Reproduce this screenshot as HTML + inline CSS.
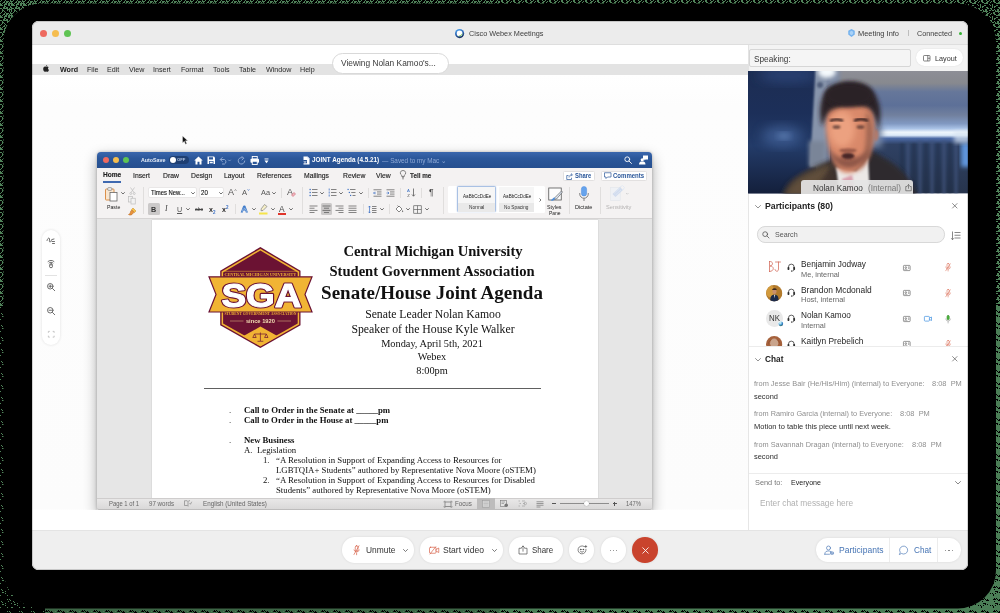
<!DOCTYPE html>
<html><head><meta charset="utf-8">
<style>
*{box-sizing:border-box;margin:0;padding:0}
html,body{width:1000px;height:613px;overflow:hidden;background:#000}
body{position:relative;font-family:"Liberation Sans",sans-serif;color:#333}
.a{position:absolute}
.t{position:absolute;white-space:nowrap;line-height:1;transform-origin:0 50%;transform:scale(.9999)}
.s{font-family:"Liberation Serif",serif;color:#111}
.c{transform:translateX(-50%) scale(.9999)}
svg{position:absolute;overflow:visible}
#win{position:absolute;left:32.200px;top:21.200px;width:935.400px;height:548.400px;border-radius:6.500px;overflow:hidden;background:#fdfdfd}
#pg{position:absolute;left:-32.200px;top:-21.200px;width:1000px;height:613px;will-change:transform;filter:blur(.4px)}
.pill{position:absolute;background:#fff;border-radius:13px;box-shadow:0 0 2px rgba(0,0,0,.10)}
.sep{position:absolute;width:1px;background:#e0dedd}
.n{transform:scaleX(.92)}
.mb .t{font-size:7.75px;top:65.6px;color:#2a2a2a;transform:scaleX(.92)}
.tab .t{font-size:7.4px;top:171.5px;color:#1e1e1e;-webkit-text-stroke:.15px #1e1e1e;transform:scaleX(.92)}
</style></head><body>
<!-- outer dither frame -->
<svg class="a" style="left:0;top:0" width="1000" height="613">
<defs><pattern id="dz" width="12" height="12" patternUnits="userSpaceOnUse"><rect width="12" height="12" fill="#4b7e56"/><g fill="#000"><rect x="9" y="7" width="1" height="1"/><rect x="11" y="11" width="1" height="1"/><rect x="9" y="11" width="1" height="1"/><rect x="10" y="10" width="1" height="1"/><rect x="4" y="0" width="1" height="1"/><rect x="3" y="11" width="1" height="1"/><rect x="10" y="11" width="1" height="1"/><rect x="10" y="1" width="1" height="1"/><rect x="2" y="0" width="1" height="1"/><rect x="9" y="6" width="1" height="1"/><rect x="6" y="5" width="1" height="1"/><rect x="3" y="0" width="1" height="1"/><rect x="1" y="11" width="1" height="1"/><rect x="11" y="5" width="1" height="1"/><rect x="0" y="10" width="1" height="1"/><rect x="8" y="5" width="1" height="1"/><rect x="3" y="4" width="1" height="1"/><rect x="0" y="3" width="1" height="1"/><rect x="11" y="3" width="1" height="1"/><rect x="1" y="4" width="1" height="1"/><rect x="1" y="3" width="1" height="1"/></g></pattern>
<pattern id="dtl" width="12" height="12" patternUnits="userSpaceOnUse"><rect width="12" height="12" fill="#000"/><g fill="#4f8259"><rect x="5" y="0" width="1" height="1"/><rect x="11" y="7" width="1" height="1"/><rect x="2" y="9" width="1" height="1"/><rect x="7" y="10" width="1" height="1"/><rect x="10" y="1" width="1" height="1"/><rect x="1" y="4" width="1" height="1"/><rect x="0" y="3" width="1" height="1"/><rect x="10" y="0" width="1" height="1"/><rect x="5" y="6" width="1" height="1"/><rect x="4" y="11" width="1" height="1"/><rect x="4" y="1" width="1" height="1"/><rect x="11" y="4" width="1" height="1"/><rect x="11" y="10" width="1" height="1"/><rect x="8" y="5" width="1" height="1"/><rect x="3" y="2" width="1" height="1"/><rect x="11" y="2" width="1" height="1"/><rect x="10" y="9" width="1" height="1"/><rect x="9" y="3" width="1" height="1"/><rect x="9" y="10" width="1" height="1"/><rect x="11" y="3" width="1" height="1"/><rect x="11" y="1" width="1" height="1"/><rect x="11" y="8" width="1" height="1"/><rect x="0" y="1" width="1" height="1"/><rect x="7" y="1" width="1" height="1"/><rect x="8" y="3" width="1" height="1"/><rect x="0" y="8" width="1" height="1"/><rect x="1" y="8" width="1" height="1"/><rect x="8" y="1" width="1" height="1"/><rect x="6" y="3" width="1" height="1"/><rect x="0" y="5" width="1" height="1"/><rect x="10" y="7" width="1" height="1"/><rect x="9" y="11" width="1" height="1"/><rect x="11" y="5" width="1" height="1"/><rect x="8" y="9" width="1" height="1"/><rect x="2" y="10" width="1" height="1"/><rect x="11" y="11" width="1" height="1"/><rect x="6" y="4" width="1" height="1"/><rect x="7" y="8" width="1" height="1"/><rect x="10" y="3" width="1" height="1"/><rect x="7" y="7" width="1" height="1"/><rect x="8" y="4" width="1" height="1"/><rect x="4" y="6" width="1" height="1"/><rect x="4" y="2" width="1" height="1"/><rect x="7" y="9" width="1" height="1"/><rect x="6" y="1" width="1" height="1"/><rect x="4" y="8" width="1" height="1"/><rect x="1" y="5" width="1" height="1"/><rect x="3" y="10" width="1" height="1"/><rect x="1" y="0" width="1" height="1"/><rect x="0" y="4" width="1" height="1"/><rect x="9" y="8" width="1" height="1"/><rect x="5" y="3" width="1" height="1"/><rect x="2" y="3" width="1" height="1"/><rect x="11" y="9" width="1" height="1"/><rect x="7" y="2" width="1" height="1"/><rect x="4" y="7" width="1" height="1"/><rect x="6" y="8" width="1" height="1"/><rect x="9" y="5" width="1" height="1"/><rect x="4" y="5" width="1" height="1"/><rect x="5" y="4" width="1" height="1"/><rect x="9" y="2" width="1" height="1"/><rect x="9" y="4" width="1" height="1"/><rect x="3" y="8" width="1" height="1"/><rect x="5" y="8" width="1" height="1"/><rect x="6" y="2" width="1" height="1"/><rect x="4" y="4" width="1" height="1"/><rect x="6" y="7" width="1" height="1"/><rect x="2" y="5" width="1" height="1"/><rect x="3" y="7" width="1" height="1"/><rect x="10" y="6" width="1" height="1"/><rect x="2" y="11" width="1" height="1"/><rect x="9" y="9" width="1" height="1"/></g></pattern><pattern id="dtr" width="12" height="12" patternUnits="userSpaceOnUse"><rect width="12" height="12" fill="#000"/><g fill="#4f8259"><rect x="5" y="0" width="1" height="1"/><rect x="6" y="5" width="1" height="1"/><rect x="2" y="2" width="1" height="1"/><rect x="8" y="5" width="1" height="1"/><rect x="10" y="2" width="1" height="1"/><rect x="3" y="3" width="1" height="1"/><rect x="1" y="11" width="1" height="1"/><rect x="1" y="5" width="1" height="1"/><rect x="0" y="5" width="1" height="1"/><rect x="8" y="6" width="1" height="1"/><rect x="6" y="2" width="1" height="1"/><rect x="1" y="3" width="1" height="1"/><rect x="4" y="8" width="1" height="1"/><rect x="7" y="8" width="1" height="1"/><rect x="5" y="10" width="1" height="1"/><rect x="3" y="8" width="1" height="1"/><rect x="2" y="3" width="1" height="1"/><rect x="2" y="9" width="1" height="1"/><rect x="10" y="7" width="1" height="1"/><rect x="10" y="0" width="1" height="1"/><rect x="9" y="10" width="1" height="1"/><rect x="0" y="3" width="1" height="1"/><rect x="8" y="10" width="1" height="1"/><rect x="6" y="10" width="1" height="1"/><rect x="8" y="7" width="1" height="1"/><rect x="10" y="6" width="1" height="1"/><rect x="11" y="2" width="1" height="1"/><rect x="2" y="10" width="1" height="1"/><rect x="2" y="0" width="1" height="1"/><rect x="1" y="9" width="1" height="1"/><rect x="11" y="6" width="1" height="1"/><rect x="3" y="1" width="1" height="1"/><rect x="6" y="8" width="1" height="1"/><rect x="7" y="9" width="1" height="1"/><rect x="9" y="1" width="1" height="1"/><rect x="9" y="0" width="1" height="1"/><rect x="3" y="11" width="1" height="1"/><rect x="0" y="11" width="1" height="1"/><rect x="11" y="10" width="1" height="1"/><rect x="3" y="7" width="1" height="1"/><rect x="7" y="1" width="1" height="1"/><rect x="4" y="1" width="1" height="1"/><rect x="5" y="4" width="1" height="1"/><rect x="2" y="7" width="1" height="1"/><rect x="1" y="10" width="1" height="1"/><rect x="8" y="4" width="1" height="1"/><rect x="11" y="11" width="1" height="1"/><rect x="2" y="11" width="1" height="1"/><rect x="10" y="1" width="1" height="1"/><rect x="10" y="9" width="1" height="1"/><rect x="3" y="2" width="1" height="1"/></g></pattern><pattern id="dbl" width="12" height="12" patternUnits="userSpaceOnUse"><rect width="12" height="12" fill="#000"/><g fill="#4f8259"><rect x="5" y="5" width="1" height="1"/><rect x="7" y="7" width="1" height="1"/><rect x="11" y="3" width="1" height="1"/><rect x="0" y="7" width="1" height="1"/><rect x="9" y="11" width="1" height="1"/><rect x="5" y="3" width="1" height="1"/><rect x="1" y="1" width="1" height="1"/><rect x="3" y="4" width="1" height="1"/><rect x="2" y="4" width="1" height="1"/><rect x="7" y="11" width="1" height="1"/><rect x="10" y="0" width="1" height="1"/><rect x="8" y="1" width="1" height="1"/><rect x="11" y="7" width="1" height="1"/><rect x="2" y="2" width="1" height="1"/></g></pattern>
</defs>
<rect width="1000" height="613" fill="url(#dz)"/>
<rect x="0" y="0" width="500" height="306" fill="url(#dtl)"/>
<rect x="500" y="0" width="500" height="306" fill="url(#dtr)"/>
<rect x="0" y="306" width="500" height="307" fill="url(#dbl)"/>
<rect x="45" y="608" width="955" height="5" fill="url(#dz)" opacity=".8"/>
<rect x="3.500" y="3.500" width="992.500" height="605" rx="38" ry="38" fill="#000"/>
</svg>
<div id="win"><div id="pg">
<!-- title bar -->
<div class="a" style="left:32px;top:21px;width:936px;height:24px;background:#ececec;border-bottom:1px solid #dedede"></div>
<div class="a" style="left:40.2px;top:29.5px;width:7px;height:7px;border-radius:50%;background:#ee6a5f"></div>
<div class="a" style="left:52px;top:29.5px;width:7px;height:7px;border-radius:50%;background:#f5bd4f"></div>
<div class="a" style="left:63.5px;top:29.5px;width:7px;height:7px;border-radius:50%;background:#5fc453"></div>
<svg style="left:455px;top:28.700px" width="9.200" height="9.200" viewBox="0 0 18 18"><defs><radialGradient id="wb" cx="35%" cy="30%" r="75%"><stop offset="0" stop-color="#eafaff"/><stop offset=".35" stop-color="#8fd0ea"/><stop offset=".7" stop-color="#2f7fc4"/><stop offset="1" stop-color="#123a78"/></radialGradient><linearGradient id="wb2" x1=".3" y1="0" x2=".7" y2="1"><stop offset="0" stop-color="#4aa0ec"/><stop offset=".5" stop-color="#2a62b0"/><stop offset="1" stop-color="#15284e"/></linearGradient></defs><circle cx="9" cy="9" r="9" fill="url(#wb2)"/><circle cx="9" cy="8.600" r="5.600" fill="#fff"/><path d="M14.400 7.500 A5.600 5.600 0 0 1 6.500 13.600 C10.500 13.500 13.500 11 14.400 7.500Z" fill="#5dbb46"/></svg>
<div class="t" style="left:468.7px;top:29.9px;font-size:7.9px;color:#3c3c3c;transform:scaleX(.924)">Cisco Webex Meetings</div>
<svg style="left:847.5px;top:29px" width="7" height="8" viewBox="0 0 14 16"><path d="M7 0 L13.5 3.5 V11 L7 16 L.5 11 V3.500Z" fill="#74b2ee"/><path d="M7 3.500 L10.5 5.500 V10 L7 12.500 L3.500 10 V5.500Z" fill="#a9d2f8"/></svg>
<div class="t" style="left:858px;top:29.9px;font-size:8px;color:#3c3c3c;transform:scaleX(.931)">Meeting Info</div>
<div class="a" style="left:908px;top:30px;width:1px;height:6px;background:#bdbdbd"></div>
<div class="t" style="left:917px;top:29.9px;font-size:7.9px;color:#3c3c3c;transform:scaleX(.916)">Connected</div>
<div class="a" style="left:959px;top:31.5px;width:3px;height:3px;border-radius:50%;background:#34b233"></div>
<!-- left shared-content area -->
<div class="a" style="left:32px;top:45px;width:716px;height:485px;background:linear-gradient(#fff 0,#fff 30px,#fdfdfd 60px,#fcfcfc 464px,#fff 465px,#fff 100%)"></div>
<div class="a mb" style="left:32px;top:64px;width:716px;height:11px;background:#e3e3e3"></div>
<div class="mb">
<svg style="left:43.3px;top:65.3px" width="6" height="7.5" viewBox="0 0 12 15"><path d="M8.200 0 C8.300 1.200 7.300 2.800 5.900 2.800 C5.700 1.500 6.900 .2 8.200 0Z M6 3.600 C6.800 3.600 7.600 3 8.600 3 C9.600 3 10.700 3.500 11.400 4.600 C9.300 5.900 9.700 8.900 11.900 9.800 C11.400 11.200 10.200 13.500 8.800 13.500 C7.900 13.500 7.500 12.900 6.300 12.900 C5.100 12.900 4.700 13.500 3.800 13.500 C2.200 13.500 .4 10.500 .4 7.800 C.4 5 2.100 3.200 3.900 3.200 C4.800 3.200 5.400 3.600 6 3.600Z" fill="#222"/></svg>
<div class="t" style="left:59.5px;font-weight:bold;color:#222">Word</div>
<div class="t" style="left:86.7px">File</div>
<div class="t" style="left:107px">Edit</div>
<div class="t" style="left:128.5px">View</div>
<div class="t" style="left:153.2px">Insert</div>
<div class="t" style="left:181px">Format</div>
<div class="t" style="left:213.2px">Tools</div>
<div class="t" style="left:239.2px">Table</div>
<div class="t" style="left:265.5px">Window</div>
<div class="t" style="left:300.2px">Help</div>
</div>
<div class="a" style="left:332px;top:53px;width:116.500px;height:20.500px;border-radius:10.500px;background:#fff;border:1px solid #d9d9d9"></div>
<div class="t" style="left:341px;top:59.300px;font-size:9px;color:#3a3a3a;transform:scaleX(.928)">Viewing Nolan Kamoo's...</div>
<!-- cursor -->
<svg style="left:182px;top:135.500px" width="6" height="9" viewBox="0 0 12 18"><path d="M1 0 L1 14 L4.500 10.500 L7 16.500 L9.500 15.500 L7 9.500 L11.500 9.500Z" fill="#111" stroke="#eee" stroke-width=".8"/></svg>
<!-- annotation toolbar -->
<div class="a" style="left:42px;top:230px;width:17.500px;height:115px;border-radius:9px;background:#fff;box-shadow:0 0 3px rgba(0,0,0,.12)"></div>
<svg style="left:46px;top:236px" width="10" height="10" viewBox="0 0 20 20" fill="none" stroke="#555" stroke-width="1.700" stroke-linecap="round"><path d="M2 9 C4 2 8 3 7 8 C6 13 9 14 11 8 M12 11 l5 0 M13 15 l4 0 M12 7 l4 -1"/></svg>
<svg style="left:46px;top:258.500px" width="10" height="10" viewBox="0 0 20 20" fill="none" stroke="#555" stroke-width="1.700" stroke-linecap="round"><path d="M4 5 C7 2 13 2 16 5 M6 8 C8 6 12 6 14 8"/><rect x="7" y="9.500" width="6" height="8" rx="3"/><path d="M10 10 v3"/></svg>
<div class="a" style="left:45px;top:275px;width:11.500px;height:1px;background:#e2e2e2"></div>
<svg style="left:46px;top:282px" width="10" height="10" viewBox="0 0 20 20" fill="none" stroke="#555" stroke-width="1.700" stroke-linecap="round"><circle cx="8.500" cy="8.500" r="5.500"/><path d="M13 13 l4.500 4.500 M6 8.500 h5 M8.500 6 v5"/></svg>
<svg style="left:46px;top:305.500px" width="10" height="10" viewBox="0 0 20 20" fill="none" stroke="#555" stroke-width="1.700" stroke-linecap="round"><circle cx="8.500" cy="8.500" r="5.500"/><path d="M13 13 l4.500 4.500 M6 8.500 h5"/></svg>
<svg style="left:47.500px;top:331px" width="6.500" height="6.500" viewBox="0 0 18 18" fill="none" stroke="#bdbdbd" stroke-width="2.400"><path d="M1 5 V1 H5 M13 1 H17 V5 M17 13 V17 H13 M5 17 H1 V13"/></svg>
<!-- WORD window -->
<div class="a" style="left:97px;top:152px;width:555px;height:357.500px;border-radius:4px 4px 0 0;background:#e6e6e6;box-shadow:0 5px 14px rgba(0,0,0,.32),0 0 3px rgba(0,0,0,.25);clip-path:inset(-30px -30px -0.500px -30px)"></div>
<div class="a" style="left:97px;top:152px;width:555px;height:15.500px;border-radius:4px 4px 0 0;background:linear-gradient(#3a67ad,#2b579a 40%,#264f8f)"></div>
<div class="a" style="left:103.200px;top:157px;width:6px;height:6px;border-radius:50%;background:#ee6a5f"></div>
<div class="a" style="left:113px;top:157px;width:6px;height:6px;border-radius:50%;background:#f5bd4f"></div>
<div class="a" style="left:123px;top:157px;width:6px;height:6px;border-radius:50%;background:#5fc453"></div>
<div class="t" style="left:141.200px;top:157.900px;font-size:5.800px;font-weight:bold;color:#e6edf8;transform:scaleX(.915)">AutoSave</div>
<div class="a" style="left:169px;top:155.700px;width:19.500px;height:8.500px;border-radius:4.500px;background:#1e3f73"></div>
<div class="a" style="left:169.800px;top:156.600px;width:6.700px;height:6.700px;border-radius:50%;background:#fff"></div>
<div class="t" style="left:177.300px;top:158.200px;font-size:4.200px;font-weight:bold;color:#b4c4e0">OFF</div>
<svg style="left:194px;top:155.500px" width="9" height="9" viewBox="0 0 18 18"><path d="M9 1 L17.500 9 H15 V17 H11 V11.500 H7 V17 H3 V9 H.5Z" fill="#fff"/></svg>
<svg style="left:206.500px;top:155.800px" width="8.500" height="8.500" viewBox="0 0 17 17"><path d="M1 1 H14 L16 3 V16 H1Z" fill="#fff"/><rect x="4" y="2.500" width="8" height="4.500" fill="#2b579a"/><rect x="4" y="10" width="9" height="6" fill="#2b579a"/><rect x="5.500" y="11.500" width="6" height="3" fill="#fff"/></svg>
<svg style="left:218.500px;top:155.800px" width="12" height="9" viewBox="0 0 24 18" fill="none" stroke="#8fa8d2" stroke-width="2" stroke-linecap="round"><path d="M3 7 H11 A5 5 0 0 1 11 16 H7 M6.500 3 L2.500 7 L6.500 11"/><path d="M19 8 l2 2 l2 -2" stroke-width="1.500"/></svg>
<svg style="left:237px;top:155.800px" width="9" height="9" viewBox="0 0 18 18" fill="none" stroke="#8fa8d2" stroke-width="2" stroke-linecap="round"><path d="M13 4.500 A6.500 6.500 0 1 0 15.500 10 M10 1 L13.500 4.500 L10 8"/></svg>
<svg style="left:249.800px;top:155.600px" width="9.500" height="9" viewBox="0 0 19 18"><rect x="4.500" y="1" width="10" height="5" fill="none" stroke="#fff" stroke-width="1.800"/><rect x="1" y="5.500" width="17" height="8" rx="1.500" fill="#fff"/><rect x="4.500" y="10.500" width="10" height="6.500" fill="#2b579a" stroke="#fff" stroke-width="1.800"/></svg>
<svg style="left:264.300px;top:157.500px" width="5" height="6" viewBox="0 0 10 12"><rect x="1" y="1" width="8" height="1.800" fill="#fff"/><path d="M1 5 H9 L5 10.500Z" fill="#fff"/></svg>
<svg style="left:303px;top:155.500px" width="7" height="9" viewBox="0 0 14 18"><path d="M1 1 H9 L13 5 V17 H1Z" fill="#fff"/><path d="M9 1 V5 H13" fill="#c9d7ef"/><rect x="0" y="8" width="8" height="6.500" fill="#1e4a8f"/><path d="M1.500 9.500 l1.200 3.800 l1.300 -3 l1.300 3 l1.200 -3.800" stroke="#fff" fill="none" stroke-width="1"/></svg>
<div class="t" style="left:312px;top:157.400px;font-size:6.900px;font-weight:bold;color:#fff;transform:scaleX(.922)">JOINT Agenda (4.5.21)</div>
<div class="t" style="left:381.500px;top:157.600px;font-size:6.900px;color:#8fa9d6;transform:scaleX(.923)">— Saved to my Mac ⌄</div>
<svg style="left:623.500px;top:156px" width="8" height="8" viewBox="0 0 16 16" fill="none" stroke="#fff" stroke-width="1.800" stroke-linecap="round"><circle cx="6.500" cy="6.500" r="4.800"/><path d="M10.200 10.200 L15 15"/></svg>
<svg style="left:638.500px;top:155.300px" width="9.500" height="10" viewBox="0 0 19 20"><path d="M8 1 H18 V9 H13 L11 11 V9 H8Z" fill="#fff"/><circle cx="6.500" cy="9.500" r="3.200" fill="#fff"/><path d="M0 19 C0 14 3 13.200 6.500 13.200 C10 13.200 13 14 13 19Z" fill="#fff"/></svg>
<!-- tabs + ribbon bg -->
<div class="a" style="left:97px;top:167.500px;width:555px;height:51.500px;background:#f4f2f2;border-bottom:1px solid #d6d4d4"></div>
<div class="tab">
<div class="t" style="left:102.500px;top:172px;font-weight:bold;color:#222;font-size:7.150px">Home</div>
<div class="a" style="left:102.500px;top:181.200px;width:18.500px;height:1.500px;background:#3f69b0"></div>
<div class="t" style="left:132.500px">Insert</div>
<div class="t" style="left:162.700px">Draw</div>
<div class="t" style="left:190.500px">Design</div>
<div class="t" style="left:223.700px">Layout</div>
<div class="t" style="left:257px">References</div>
<div class="t" style="left:304.200px">Mailings</div>
<div class="t" style="left:342.500px">Review</div>
<div class="t" style="left:376.200px">View</div>
<svg style="left:400px;top:170px" width="6" height="9.500" viewBox="0 0 12 19" fill="none" stroke="#555" stroke-width="1.400"><path d="M6 1 A5 5 0 0 1 8.500 10.500 V13 H3.500 V10.500 A5 5 0 0 1 6 1Z M4 15.500 H8 M4.800 17.800 H7.200"/></svg>
<div class="t" style="left:410px;top:172.500px;font-weight:bold;color:#333;font-size:6.850px">Tell me</div>
</div>
<div class="a" style="left:562.500px;top:170.700px;width:32px;height:10.500px;background:#fff;border:1px solid #e2e0e0;border-radius:1.500px"></div>
<svg style="left:566px;top:172.500px" width="7.500" height="7" viewBox="0 0 15 14" fill="none" stroke="#2b579a" stroke-width="1.400"><path d="M5 5 H1.500 V13 H11 V9.500 M6 9 C6 5 9 3.500 12 3.500 M10 1 L13 3.500 L10 6.500"/></svg>
<div class="t n" style="left:575px;top:173.100px;font-size:6.400px;font-weight:bold;color:#2b579a">Share</div>
<div class="a" style="left:600.700px;top:170.700px;width:46.500px;height:10.500px;background:#fff;border:1px solid #e2e0e0;border-radius:1.500px"></div>
<svg style="left:604px;top:172.300px" width="7.500" height="7.500" viewBox="0 0 15 15" fill="none" stroke="#2b579a" stroke-width="1.400"><path d="M1 1.500 H14 V10 H7 L4 13 V10 H1Z"/></svg>
<div class="t n" style="left:613px;top:173.100px;font-size:6.550px;font-weight:bold;color:#2b579a">Comments</div>
<svg style="left:104.500px;top:187px" width="13" height="14.500" viewBox="0 0 26 29"><rect x="1" y="4" width="17" height="22" rx="1.500" fill="#f8e6d0" stroke="#d8863a" stroke-width="1.800"/><rect x="5.500" y="1.500" width="8" height="5" rx="1.200" fill="#fff" stroke="#777" stroke-width="1.500"/><rect x="10" y="11" width="14" height="17" fill="#fff" stroke="#666" stroke-width="1.600"/></svg>
<svg style="left:120.5px;top:192.3px" width="4" height="2.500" viewBox="0 0 8 5" fill="none" stroke="#444" stroke-width="1.500" stroke-linecap="round"><path d="M1 1 L4 4 L7 1"/></svg>
<div class="t n" style="left:106.700px;top:205.100px;font-size:5.650px;color:#222">Paste</div>
<svg style="left:128.500px;top:187px" width="7" height="8" viewBox="0 0 14 16" fill="none" stroke="#bdbdbd" stroke-width="1.400"><path d="M3 1 L10 11 M11 1 L4 11"/><circle cx="3.500" cy="13" r="2"/><circle cx="10.500" cy="13" r="2"/></svg>
<svg style="left:128.300px;top:196.300px" width="8" height="8.500" viewBox="0 0 16 17" fill="#f2f2f2" stroke="#bdbdbd" stroke-width="1.400"><rect x="1" y="1" width="8" height="11"/><rect x="6" y="4.500" width="8.500" height="11.500"/></svg>
<svg style="left:127.800px;top:206.500px" width="9" height="9" viewBox="0 0 18 18"><path d="M10 2 L16 8 L13 11 L7 5Z" fill="#f6c24a" stroke="#c98a1a" stroke-width="1"/><path d="M7.500 6 L12 10.500 L8 15 C5 17 2 16 1 15 C4 14 5 11 5 9Z" fill="#e8923a" stroke="#b3621f" stroke-width="1"/></svg>
<div class="sep" style="left:142.5px;top:186.5px;height:27.5px"></div>
<div class="a" style="left:148.200px;top:187.400px;width:48.500px;height:11.100px;background:#fff;border:1px solid #e9e7e7;border-radius:2px"></div>
<div class="t n" style="left:151.200px;top:189.900px;font-size:6.450px;color:#111;-webkit-text-stroke:.12px #111">Times New...</div>
<svg style="left:191px;top:191.8px" width="4" height="2.500" viewBox="0 0 8 5" fill="none" stroke="#444" stroke-width="1.500" stroke-linecap="round"><path d="M1 1 L4 4 L7 1"/></svg>
<div class="a" style="left:198.500px;top:187.400px;width:25.800px;height:11.100px;background:#fff;border:1px solid #e9e7e7;border-radius:2px"></div>
<div class="t n" style="left:201.200px;top:189.900px;font-size:6.650px;color:#111;-webkit-text-stroke:.12px #111">20</div>
<svg style="left:218.8px;top:191.8px" width="4" height="2.500" viewBox="0 0 8 5" fill="none" stroke="#444" stroke-width="1.500" stroke-linecap="round"><path d="M1 1 L4 4 L7 1"/></svg>
<div class="t" style="left:228px;top:188.300px;font-size:9px;color:#555">A</div><svg style="left:234px;top:188.500px" width="3" height="2" viewBox="0 0 6 4" fill="none" stroke="#666" stroke-width="1.200"><path d="M1 3.500 L3 1 L5 3.500"/></svg>
<div class="t" style="left:242px;top:189.300px;font-size:7.600px;color:#555">A</div><svg style="left:247.300px;top:188.800px" width="3" height="2" viewBox="0 0 6 4" fill="none" stroke="#3a6fc4" stroke-width="1.200"><path d="M1 .5 L3 3 L5 .5"/></svg>
<div class="t n" style="left:260.800px;top:189px;font-size:8px;color:#555">Aa</div>
<svg style="left:271.7px;top:191.8px" width="4" height="2.500" viewBox="0 0 8 5" fill="none" stroke="#444" stroke-width="1.500" stroke-linecap="round"><path d="M1 1 L4 4 L7 1"/></svg>
<div class="sep" style="left:281px;top:188px;height:10px"></div>
<div class="t" style="left:287px;top:188.300px;font-size:9px;color:#555">A</div><svg style="left:291px;top:192px" width="5" height="5" viewBox="0 0 10 10"><path d="M1 6 L6 1 L9 4 L4 9Z" fill="#f2b8c0" stroke="#c4485a" stroke-width="1"/></svg>
<div class="sep" style="left:302px;top:186.5px;height:27.5px"></div>
<svg style="left:308.7px;top:188.0px" width="9" height="9" viewBox="0 0 18 18"><rect x="1" y="1.7" width="2.600" height="2.600" fill="#3a6fc4"/><rect x="6" y="2.3" width="11" height="1.400" fill="#555"/><rect x="1" y="7.7" width="2.600" height="2.600" fill="#3a6fc4"/><rect x="6" y="8.3" width="11" height="1.400" fill="#555"/><rect x="1" y="13.7" width="2.600" height="2.600" fill="#3a6fc4"/><rect x="6" y="14.3" width="11" height="1.400" fill="#555"/></svg>
<svg style="left:320.3px;top:191.8px" width="4" height="2.500" viewBox="0 0 8 5" fill="none" stroke="#444" stroke-width="1.500" stroke-linecap="round"><path d="M1 1 L4 4 L7 1"/></svg>
<svg style="left:327.5px;top:188.0px" width="9" height="9" viewBox="0 0 18 18"><rect x="1.500" y="1" width="1.600" height="4" fill="#3a6fc4"/><rect x="6" y="2.3" width="11" height="1.400" fill="#555"/><rect x="1.500" y="7" width="1.600" height="4" fill="#3a6fc4"/><rect x="6" y="8.3" width="11" height="1.400" fill="#555"/><rect x="1.500" y="13" width="1.600" height="4" fill="#3a6fc4"/><rect x="6" y="14.3" width="11" height="1.400" fill="#555"/></svg>
<svg style="left:339.2px;top:191.8px" width="4" height="2.500" viewBox="0 0 8 5" fill="none" stroke="#444" stroke-width="1.500" stroke-linecap="round"><path d="M1 1 L4 4 L7 1"/></svg>
<svg style="left:346.7px;top:188.0px" width="9" height="9" viewBox="0 0 18 18"><rect x="1.0" y="1.7" width="2.400" height="2.400" fill="#3a6fc4"/><rect x="6.0" y="2.3" width="11.0" height="1.400" fill="#555"/><rect x="3.5" y="7.7" width="2.400" height="2.400" fill="#3a6fc4"/><rect x="8.5" y="8.3" width="8.5" height="1.400" fill="#555"/><rect x="6.0" y="13.7" width="2.400" height="2.400" fill="#3a6fc4"/><rect x="11.0" y="14.3" width="6.0" height="1.400" fill="#555"/></svg>
<svg style="left:358.5px;top:191.8px" width="4" height="2.500" viewBox="0 0 8 5" fill="none" stroke="#444" stroke-width="1.500" stroke-linecap="round"><path d="M1 1 L4 4 L7 1"/></svg>
<div class="sep" style="left:367.5px;top:188px;height:10px"></div>
<svg style="left:373.0px;top:188.5px" width="9" height="8" viewBox="0 0 18 16"><rect x="1" y="1" width="16" height="1.400" fill="#555"/><rect x="1" y="13.600" width="16" height="1.400" fill="#555"/><rect x="8" y="5.200" width="9" height="1.400" fill="#555"/><rect x="8" y="9.400" width="9" height="1.400" fill="#555"/><path d="M6 8 H1.500 M3.500 5.500 L1 8 L3.500 10.500" fill="none" stroke="#3a6fc4" stroke-width="1.400"/></svg>
<svg style="left:386.0px;top:188.5px" width="9" height="8" viewBox="0 0 18 16"><rect x="1" y="1" width="16" height="1.400" fill="#555"/><rect x="1" y="13.600" width="16" height="1.400" fill="#555"/><rect x="8" y="5.200" width="9" height="1.400" fill="#555"/><rect x="8" y="9.400" width="9" height="1.400" fill="#555"/><path d="M1 8 H5.500 M3.500 5.500 L6 8 L3.500 10.500" fill="none" stroke="#3a6fc4" stroke-width="1.400"/></svg>
<div class="sep" style="left:400px;top:188px;height:10px"></div>
<svg style="left:406.500px;top:188px" width="9" height="9.500" viewBox="0 0 18 19"><text x="0" y="8" font-family="Liberation Sans" font-size="8.500" fill="#3a6fc4">A</text><text x="0.500" y="17.500" font-family="Liberation Sans" font-size="8.500" fill="#555">Z</text><path d="M13 1 V16 M10 13 L13 16.500 L16 13" fill="none" stroke="#555" stroke-width="1.500"/></svg>
<div class="sep" style="left:421px;top:188px;height:10px"></div>
<div class="t" style="left:429px;top:188.300px;font-size:8.500px;color:#444">¶</div>
<div class="sep" style="left:442.5px;top:186.5px;height:27.5px"></div>
<div class="a" style="left:148px;top:203.300px;width:11.500px;height:11.500px;background:#cbc9c9;border-radius:1.500px"></div>
<div class="t" style="left:151.300px;top:205.600px;font-size:7.200px;font-weight:bold;color:#333">B</div>
<div class="t s" style="left:165.300px;top:205.300px;font-size:7.800px;font-style:italic;color:#444">I</div>
<div class="t" style="left:176.800px;top:205.500px;font-size:7.200px;color:#555;text-decoration:underline">U</div>
<svg style="left:186.3px;top:208.3px" width="4" height="2.500" viewBox="0 0 8 5" fill="none" stroke="#444" stroke-width="1.500" stroke-linecap="round"><path d="M1 1 L4 4 L7 1"/></svg>
<div class="t n" style="left:194.800px;top:206.600px;font-size:5.400px;color:#444;text-decoration:line-through">abc</div>
<div class="t" style="left:209px;top:205.800px;font-size:7px;color:#2a2a2a;font-weight:bold">x<span style="font-size:4.500px;color:#3a6fc4;position:relative;top:1.500px">2</span></div>
<div class="t" style="left:222.300px;top:205.800px;font-size:7px;color:#2a2a2a;font-weight:bold">x<span style="font-size:4.500px;color:#3a6fc4;position:relative;top:-3px">2</span></div>
<div class="sep" style="left:234.5px;top:204px;height:10px"></div>
<div class="t" style="left:241.300px;top:204.600px;font-size:9.200px;font-weight:bold;color:#fff;-webkit-text-stroke:.75px #3a78c9">A</div>
<svg style="left:251.5px;top:208.3px" width="4" height="2.500" viewBox="0 0 8 5" fill="none" stroke="#444" stroke-width="1.500" stroke-linecap="round"><path d="M1 1 L4 4 L7 1"/></svg>
<svg style="left:258.800px;top:203.800px" width="9" height="11" viewBox="0 0 18 22"><path d="M11 1 L16 5 L8 13 L4 13.500 L4.500 9.500Z" fill="#f7f0c8" stroke="#777" stroke-width="1.300"/><rect x="0" y="17" width="17" height="4" fill="#f6e44a"/></svg>
<svg style="left:270.5px;top:208.3px" width="4" height="2.500" viewBox="0 0 8 5" fill="none" stroke="#444" stroke-width="1.500" stroke-linecap="round"><path d="M1 1 L4 4 L7 1"/></svg>
<div class="t" style="left:279px;top:204.600px;font-size:8.400px;color:#444">A</div><div class="a" style="left:278px;top:212.500px;width:8px;height:2px;background:#e0352b"></div>
<svg style="left:289.2px;top:208.3px" width="4" height="2.500" viewBox="0 0 8 5" fill="none" stroke="#444" stroke-width="1.500" stroke-linecap="round"><path d="M1 1 L4 4 L7 1"/></svg>
<svg style="left:308.7px;top:205.10000000000002px" width="9" height="8.500" viewBox="0 0 18 17"><rect x="1" y="1.3" width="16" height="1.400" fill="#555"/><rect x="1" y="5.6" width="10" height="1.400" fill="#555"/><rect x="1" y="9.9" width="16" height="1.400" fill="#555"/><rect x="1" y="14.2" width="10" height="1.400" fill="#555"/></svg>
<div class="a" style="left:320.600px;top:203.300px;width:11.600px;height:11.500px;background:#cbc9c9;border-radius:1.500px"></div>
<svg style="left:321.9px;top:205.10000000000002px" width="9" height="8.500" viewBox="0 0 18 17"><rect x="1.0" y="1.3" width="16" height="1.400" fill="#555"/><rect x="4.0" y="5.6" width="10" height="1.400" fill="#555"/><rect x="1.0" y="9.9" width="16" height="1.400" fill="#555"/><rect x="4.0" y="14.2" width="10" height="1.400" fill="#555"/></svg>
<svg style="left:334.7px;top:205.10000000000002px" width="9" height="8.500" viewBox="0 0 18 17"><rect x="1" y="1.3" width="16" height="1.400" fill="#555"/><rect x="7" y="5.6" width="10" height="1.400" fill="#555"/><rect x="1" y="9.9" width="16" height="1.400" fill="#555"/><rect x="7" y="14.2" width="10" height="1.400" fill="#555"/></svg>
<svg style="left:347.7px;top:205.10000000000002px" width="9" height="8.500" viewBox="0 0 18 17"><rect x="1" y="1.3" width="16" height="1.400" fill="#555"/><rect x="1" y="5.6" width="16" height="1.400" fill="#555"/><rect x="1" y="9.9" width="16" height="1.400" fill="#555"/><rect x="1" y="14.2" width="16" height="1.400" fill="#555"/></svg>
<div class="sep" style="left:362.5px;top:204px;height:10px"></div>
<svg style="left:368px;top:204.800px" width="9" height="9" viewBox="0 0 18 18"><path d="M3 2 V16 M1 4.500 L3 2 L5 4.500 M1 13.500 L3 16 L5 13.500" fill="none" stroke="#3a6fc4" stroke-width="1.400"/><rect x="8" y="2.300" width="9" height="1.400" fill="#555"/><rect x="8" y="6.300" width="9" height="1.400" fill="#555"/><rect x="8" y="10.300" width="9" height="1.400" fill="#555"/><rect x="8" y="14.300" width="9" height="1.400" fill="#555"/></svg>
<svg style="left:379.5px;top:208.3px" width="4" height="2.500" viewBox="0 0 8 5" fill="none" stroke="#444" stroke-width="1.500" stroke-linecap="round"><path d="M1 1 L4 4 L7 1"/></svg>
<div class="sep" style="left:388.7px;top:204px;height:10px"></div>
<svg style="left:394.500px;top:204.500px" width="9" height="9" viewBox="0 0 18 18"><path d="M8 2 L14 8 L8 14 L2 8Z" fill="#fff" stroke="#555" stroke-width="1.400"/><path d="M15 10 C16.500 12.500 17 13.500 15.500 14.500 C14 13.500 14 12.500 15 10Z" fill="#555"/><path d="M5 1 L8 4" stroke="#555" stroke-width="1.300"/></svg>
<svg style="left:405.5px;top:208.3px" width="4" height="2.500" viewBox="0 0 8 5" fill="none" stroke="#444" stroke-width="1.500" stroke-linecap="round"><path d="M1 1 L4 4 L7 1"/></svg>
<svg style="left:413px;top:204.800px" width="9" height="9" viewBox="0 0 18 18" fill="none" stroke="#555" stroke-width="1.300"><rect x="1.500" y="1.500" width="15" height="15"/><path d="M9 1.500 V16.500 M1.500 9 H16.500"/></svg>
<svg style="left:424.7px;top:208.3px" width="4" height="2.500" viewBox="0 0 8 5" fill="none" stroke="#444" stroke-width="1.500" stroke-linecap="round"><path d="M1 1 L4 4 L7 1"/></svg>
<div class="a" style="left:448px;top:185.500px;width:96.500px;height:27.500px;background:#fff;border-radius:1.500px"></div>
<div class="a" style="left:456.500px;top:186.300px;width:39.300px;height:26.200px;background:#f6f6f6;border:1px solid #a9c1e4;border-radius:1.500px;box-shadow:0 0 1.500px #a9c1e4"></div>
<div class="a" style="left:457.500px;top:203px;width:37.300px;height:8.500px;background:#e9e9e9"></div>
<div class="t n" style="left:463px;top:193.900px;font-size:5px;color:#222">AaBbCcDdEe</div>
<div class="t n" style="left:468.500px;top:204.500px;font-size:5.200px;color:#333">Normal</div>
<div class="a" style="left:498.800px;top:187.300px;width:35px;height:24.200px;background:#f6f6f6"></div>
<div class="a" style="left:498.800px;top:203px;width:35px;height:8.500px;background:#e9e9e9"></div>
<div class="t n" style="left:503px;top:193.900px;font-size:5px;color:#222">AaBbCcDdEe</div>
<div class="t n" style="left:504px;top:204.500px;font-size:5.150px;color:#333">No Spacing</div>
<svg style="left:539px;top:197.500px" width="2.500" height="4" viewBox="0 0 5 8" fill="none" stroke="#444" stroke-width="1.400"><path d="M1 1 L4 4 L1 7"/></svg>
<svg style="left:547.500px;top:186.500px" width="15" height="15" viewBox="0 0 30 30"><rect x="1.500" y="2" width="25" height="24" fill="#fdfdfd" stroke="#555" stroke-width="1.600"/><path d="M27 8 L29 10 L17 24 L13 25 L14 21Z" fill="#dfe9f7" stroke="#555" stroke-width="1.300"/><path d="M13 25 C10 28 7 28 5 26 C8 25.500 9 23 11 21.500 L14 21Z" fill="#4f8fdc"/></svg>
<div class="t n" style="left:547.300px;top:205.200px;font-size:5.800px;color:#222">Styles</div>
<div class="t n" style="left:548.800px;top:211px;font-size:5.400px;color:#222">Pane</div>
<div class="sep" style="left:568.7px;top:186.5px;height:27.5px"></div>
<svg style="left:578px;top:185.800px" width="12" height="16" viewBox="0 0 24 32"><rect x="6.800" y="1" width="10.400" height="19" rx="5.200" fill="#66a3ec" stroke="#4a8be0" stroke-width="1"/><path d="M3.500 14 V16 A8.500 8.500 0 0 0 20.500 16 V14 M12 24.500 V30" fill="none" stroke="#666" stroke-width="1.600"/></svg>
<div class="t n" style="left:575.300px;top:204.300px;font-size:6.100px;color:#222">Dictate</div>
<div class="sep" style="left:599.5px;top:186.5px;height:27.5px"></div>
<svg style="left:609px;top:186px" width="20" height="16" viewBox="0 0 40 32" opacity=".8"><rect x="2.500" y="3" width="20" height="26" fill="#eef1f6" stroke="#dfe3ea" stroke-width="1.200"/><path d="M7 16 L22 2 L28 8 L13 22Z" fill="#c9d7ee"/><path d="M10 15 L21 5 M13 18 L24 8 M22 2 L27 -1 L31 3 L28 8" stroke="#dbe5f4" stroke-width="1.600" fill="none"/><path d="M34 14 l2.500 2.500 l2.500 -2.500" fill="none" stroke="#b5b5b5" stroke-width="1.300"/></svg>
<div class="t n" style="left:606px;top:204.300px;font-size:6.150px;color:#b4b2b2">Sensitivity</div>
<!--RIBBONEND-->
<!-- document page -->
<div class="a" style="left:152px;top:219.500px;width:446px;height:278px;background:#fff;box-shadow:0 0 1px rgba(0,0,0,.25)"></div>
<!-- SGA logo -->
<svg style="left:200px;top:240px" width="120" height="115" viewBox="0 0 120 115">
<path d="M60.400 7.100 L100.500 30.800 V85.300 L60.400 108 L20.200 85.300 V30.800Z" fill="#6b1233"/>
<path d="M60.400 8.700 L99.200 31.600 V84.500 L60.400 106.400 L21.600 84.500 V31.600Z" fill="#f1b434"/>
<path d="M60.400 10.500 L97.700 32.500 V83.600 L60.400 104.600 L23.100 83.600 V32.500Z" fill="#6b1233"/>
<path d="M60.400 86.600 L77.800 96.300 L60.400 106 L43 96.300Z" fill="#f1b434"/>
<path d="M9 36.800 H112 L105 54.400 L112 72 H9 L16 54.400Z" fill="#f1b434" stroke="#6b1233" stroke-width="1.200"/>
<path d="M24.500 31.300 H96.500" stroke="#f1b434" stroke-width=".5"/>
<text x="60.400" y="36" text-anchor="middle" font-family="Liberation Serif" font-weight="bold" font-size="4.300" fill="#f1b434" textLength="72" lengthAdjust="spacingAndGlyphs">CENTRAL MICHIGAN UNIVERSITY</text>
<text x="60.400" y="74.800" text-anchor="middle" font-family="Liberation Serif" font-weight="bold" font-size="4" fill="#f1b434" textLength="72" lengthAdjust="spacingAndGlyphs" transform="translate(0 0)">STUDENT GOVERNMENT ASSOCIATION</text>
<path d="M30 81 H43.500 M77.400 81 H91" stroke="#e8c98a" stroke-width=".5"/>
<text x="60.400" y="82.800" text-anchor="middle" font-family="Liberation Sans" font-weight="bold" font-size="5" fill="#f3dfb3" textLength="29" lengthAdjust="spacingAndGlyphs">since 1920</text>
<text x="61.500" y="66.600" text-anchor="middle" font-family="Liberation Sans" font-weight="bold" font-size="33.500" fill="#6b1233" stroke="#6b1233" stroke-width="3.200" stroke-linejoin="round" textLength="80" lengthAdjust="spacingAndGlyphs">SGA</text><text x="61.500" y="66.600" text-anchor="middle" font-family="Liberation Sans" font-weight="bold" font-size="33.500" fill="#fff" stroke="#fff" stroke-width="1" stroke-linejoin="round" textLength="80" lengthAdjust="spacingAndGlyphs">SGA</text>
<g stroke="#6b1233" stroke-width=".7" fill="none"><path d="M60.400 92.500 V101 M57.500 101.300 H63.300 M54.500 94 H66.300 M54.500 94 L52.800 97.500 H56.200Z M66.300 94 L64.600 97.500 H68Z"/></g>
</svg>
<!-- header text -->
<div class="t s c" style="left:432.500px;top:244.100px;font-size:14.600px;font-weight:bold">Central Michigan University</div>
<div class="t s c" style="left:432.300px;top:263.500px;font-size:14.600px;font-weight:bold">Student Government Association</div>
<div class="t s c" style="left:432.400px;top:283px;font-size:19.030px;font-weight:bold">Senate/House Joint Agenda</div>
<div class="t s c" style="left:432.700px;top:309px;font-size:11.720px">Senate Leader Nolan Kamoo</div>
<div class="t s c" style="left:432.800px;top:323.600px;font-size:11.780px">Speaker of the House Kyle Walker</div>
<div class="t s c" style="left:432.200px;top:338.800px;font-size:10.330px">Monday, April 5th, 2021</div>
<div class="t s c" style="left:432.300px;top:352.200px;font-size:10.330px">Webex</div>
<div class="t s c" style="left:432.300px;top:365.500px;font-size:10.330px">8:00pm</div>
<div class="a" style="left:204.200px;top:388.300px;width:337.300px;height:1px;background:#606060"></div>
<!-- body -->
<div class="t s" style="left:229px;top:406px;font-size:8.750px">.</div>
<div class="t s" style="left:243.700px;top:406px;font-size:8.740px;font-weight:bold">Call to Order in the Senate at _____pm</div>
<div class="t s" style="left:229px;top:416.100px;font-size:8.750px">.</div>
<div class="t s" style="left:243.700px;top:416.100px;font-size:8.720px;font-weight:bold">Call to Order in the House at _____pm</div>
<div class="t s" style="left:229px;top:436.100px;font-size:8.750px">.</div>
<div class="t s" style="left:243.700px;top:436.100px;font-size:8.700px;font-weight:bold">New Business</div>
<div class="t s" style="left:243.700px;top:446.200px;font-size:8.750px">A.</div>
<div class="t s" style="left:256.500px;top:446.200px;font-size:8.720px">Legislation</div>
<div class="t s" style="left:263.300px;top:456px;font-size:8.750px">1.</div>
<div class="t s" style="left:276.200px;top:456px;font-size:8.810px">“A Resolution in Support of Expanding Access to Resources for</div>
<div class="t s" style="left:276.200px;top:465.800px;font-size:8.760px">LGBTQIA+ Students” authored by Representative Nova Moore (oSTEM)</div>
<div class="t s" style="left:263.300px;top:476px;font-size:8.750px">2.</div>
<div class="t s" style="left:276.200px;top:476px;font-size:8.800px">“A Resolution in Support of Expanding Access to Resources for Disabled</div>
<div class="t s" style="left:276.200px;top:485.800px;font-size:8.770px">Students” authored by Representative Nova Moore (oSTEM)</div>
<!-- status bar -->
<div class="a" style="left:97px;top:497.500px;width:555px;height:12px;background:linear-gradient(#e9e8e8,#dad9d9);border-top:1px solid #cfcdcd;border-bottom:1px solid #bdbcbc;border-radius:0 0 2px 2px"></div>
<div class="t n" style="left:108.700px;top:500.700px;font-size:6.380px;color:#666">Page 1 of 1</div>
<div class="t n" style="left:149.200px;top:500.700px;font-size:6.690px;color:#666">97 words</div>
<svg style="left:184px;top:500px" width="8" height="7" viewBox="0 0 16 14" fill="none" stroke="#777" stroke-width="1.200"><path d="M1 1.500 H6.500 L8 3 V12.500 L6.500 11 H1Z M8 3 L9.500 1.500 H12"/><path d="M11 6 l2 2.500 l2.500 -5" stroke-width="1.100"/></svg>
<div class="t n" style="left:203px;top:500.700px;font-size:6.800px;color:#666">English (United States)</div>
<svg style="left:444px;top:500.700px" width="8" height="6.500" viewBox="0 0 16 13" fill="none" stroke="#666" stroke-width="1.300"><rect x="2" y="2" width="12" height="9"/><path d="M0 3 V0.500 H3 M13 .5 H16 V3 M16 10 V12.500 H13 M3 12.500 H0 V10" stroke-width="1"/></svg>
<div class="t n" style="left:454.600px;top:500.700px;font-size:6.750px;color:#666">Focus</div>
<div class="a" style="left:477.200px;top:498px;width:17.700px;height:11.500px;background:#bdbcbc"></div>
<svg style="left:482px;top:500px" width="8" height="7.500" viewBox="0 0 16 15"><rect x=".7" y=".7" width="14.600" height="13.600" fill="#d8d8d8" stroke="#9a9a9a" stroke-width="1.200"/><path d="M3 4 H13 M3 7 H13 M3 10 H13" stroke="#aaa" stroke-width="1"/></svg>
<svg style="left:500px;top:500px" width="8.500" height="7.500" viewBox="0 0 17 15"><rect x=".7" y=".7" width="12" height="12" fill="#e4e4e4" stroke="#777" stroke-width="1.200"/><path d="M3 4 H10 M3 7 H8" stroke="#777" stroke-width="1.100"/><circle cx="12.500" cy="10.500" r="3.500" fill="#777"/></svg>
<svg style="left:517.500px;top:500.300px" width="9" height="7" viewBox="0 0 18 14" fill="none" stroke="#999" stroke-width="1.200"><path d="M1 2 H4 M3 7 H6 M1 12 H4 M8 2 H14 M10 7 H14 M8 12 H14"/><circle cx="14.500" cy="7" r="2.500"/></svg>
<svg style="left:535.500px;top:500.500px" width="8" height="6.500" viewBox="0 0 16 13" stroke="#777" stroke-width="1.400"><path d="M1 1.500 H15 M1 5 H15 M1 8.500 H15 M1 12 H9"/></svg>
<div class="a" style="left:552.300px;top:503.300px;width:3.400px;height:1px;background:#555"></div>
<div class="a" style="left:560.400px;top:503.300px;width:48.400px;height:1px;background:#8d8d8d"></div>
<div class="a" style="left:584.200px;top:501px;width:5.200px;height:5.200px;border-radius:50%;background:#fff;box-shadow:0 0 1px rgba(0,0,0,.5)"></div>
<div class="a" style="left:612.500px;top:503.300px;width:4px;height:1px;background:#555"></div>
<div class="a" style="left:614px;top:501.800px;width:1px;height:4px;background:#555"></div>
<div class="t n" style="left:625.700px;top:500.700px;font-size:6.300px;color:#666">147%</div>
<!-- right panel -->
<div class="a" style="left:748px;top:45px;width:220px;height:26px;background:#f3f3f3;border-left:1px solid #e3e3e3"></div>
<div class="a" style="left:748.500px;top:48.800px;width:162.500px;height:18.400px;background:#f5f5f5;border:1px solid #d6d6d6;border-radius:2px"></div>
<div class="t" style="left:753.7px;top:54.55px;font-size:9.2px;color:#3a3a3a;transform:scaleX(0.898);">Speaking:</div>
<div class="a" style="left:916px;top:49px;width:46.500px;height:17px;background:#fff;border-radius:8.500px;box-shadow:0 0 1.500px rgba(0,0,0,.12)"></div>
<svg style="left:922.700px;top:54.500px" width="7.500" height="6.500" viewBox="0 0 15 13" fill="none" stroke="#444" stroke-width="1.300"><rect x="1" y="1" width="13" height="11" rx="1.500"/><path d="M9.500 1 V12 M9.500 6.500 H14"/></svg>
<div class="t" style="left:934.5px;top:54.72px;font-size:8px;color:#333;transform:scaleX(0.905);">Layout</div>
<svg style="left:748px;top:71px" width="220" height="122.500" viewBox="0 0 220 122.500">
<defs><filter id="b1" x="-20%" y="-20%" width="140%" height="140%"><feGaussianBlur stdDeviation="1.100"/></filter><filter id="b2" x="-20%" y="-20%" width="140%" height="140%"><feGaussianBlur stdDeviation="2"/></filter><filter id="b3" x="-20%" y="-20%" width="140%" height="140%"><feGaussianBlur stdDeviation="3.200"/></filter><filter id="b6" x="-30%" y="-30%" width="160%" height="160%"><feGaussianBlur stdDeviation="6"/></filter>
<linearGradient id="vl" x1="0" y1="0" x2="0" y2="1"><stop offset="0" stop-color="#1d2d52"/><stop offset=".35" stop-color="#1c2f59"/><stop offset=".6" stop-color="#233b68"/><stop offset="1" stop-color="#121c36"/></linearGradient>
<linearGradient id="vr" x1="0" y1="0" x2="0" y2="1"><stop offset="0" stop-color="#8d8e96"/><stop offset=".10" stop-color="#87898f"/><stop offset=".17" stop-color="#66779a"/><stop offset=".28" stop-color="#5d7098"/><stop offset=".36" stop-color="#71809e"/><stop offset=".43" stop-color="#8199c2"/><stop offset=".47" stop-color="#a9c2e6"/><stop offset=".50" stop-color="#eef5fc"/><stop offset=".525" stop-color="#dbe9f8"/><stop offset=".55" stop-color="#4c6aa6"/><stop offset=".60" stop-color="#2f4163"/><stop offset="1" stop-color="#27344c"/></linearGradient>
<clipPath id="vc"><rect width="220" height="122.500"/></clipPath></defs>
<g clip-path="url(#vc)">
<rect width="220" height="122.500" fill="#6f7d98"/>
<rect x="82" y="0" width="140" height="122.500" fill="url(#vr)"/>
<rect x="84" y="52" width="50" height="24" fill="#7888a6" filter="url(#b3)"/>
<rect x="-4" y="-4" width="72" height="132" fill="url(#vl)"/>
<ellipse cx="34" cy="65" rx="20" ry="10" fill="#4668a0" opacity=".7" filter="url(#b6)"/>
<ellipse cx="36" cy="65" rx="7" ry="3.500" fill="#6a8cc0" opacity=".6" filter="url(#b3)"/>
<ellipse cx="40" cy="4" rx="30" ry="8" fill="#2f4a80" opacity=".7" filter="url(#b6)"/>
<path d="M67.500 -2 L80 -2 L77 96 L62 96Z" fill="#8794ab" filter="url(#b1)"/>
<path d="M80 -2 L92 -2 L90 60 L78 60Z" fill="#7f8ca6" filter="url(#b2)"/>
<path d="M61 70 L77 70 L77 96 L61 96Z" fill="#7a8598" filter="url(#b2)"/>
<ellipse cx="79" cy="1" rx="9" ry="6" fill="#f4f9fd" filter="url(#b2)"/>
<ellipse cx="72" cy="14" rx="3" ry="3" fill="#3a4a68" opacity=".7" filter="url(#b1)"/>
<g stroke="#3f557e" stroke-width="4" opacity=".55" filter="url(#b1)"><path d="M160 72 V124 M172 70 V124 M184 70 V124 M196 70 V124 M208 70 V124"/></g>
<g stroke="#1c2a45" stroke-width="2.500" opacity=".5" filter="url(#b1)"><path d="M154 72 V124 M166 72 V124 M178 72 V124 M190 72 V124 M202 72 V124"/></g>
<rect x="213" y="72" width="10" height="24" fill="#5f95dc" filter="url(#b2)"/>
<rect x="206" y="60" width="16" height="12" fill="#d8e4f2" opacity=".7" filter="url(#b2)"/>
<!-- suit -->
<path d="M34 126 C40 104 62 100 84 88 L124 80 C146 92 160 100 170 126Z" fill="#2f2a2e" filter="url(#b2)"/>
<path d="M36 126 C42 106 60 101 82 92 L92 126Z" fill="#66523c" opacity=".9" filter="url(#b3)"/>
<path d="M62 126 L84 94 L96 126Z" fill="#3a2f2c" opacity=".8" filter="url(#b2)"/>
<!-- shirt / tie -->
<path d="M88 96 L92 126 L122 126 L120 86 L108 100Z" fill="#ece8e6" filter="url(#b1)"/>
<path d="M94 108 L104 104 L108 124 L96 124Z" fill="#d9a0ae" filter="url(#b1)"/>
<!-- face -->
<path d="M77 40 C76 20 128 20 127 46 C128 70 122 102 100 102 C82 102 78 70 77 40Z" fill="#d9896a" filter="url(#b2)"/>
<ellipse cx="94" cy="58" rx="13" ry="18" fill="#f0a684" opacity=".85" filter="url(#b3)"/>
<path d="M118 40 C130 50 126 90 110 100 C120 80 118 60 118 40Z" fill="#8a5848" opacity=".7" filter="url(#b2)"/>
<path d="M82 78 C86 104 116 104 122 76 C114 90 90 92 82 78Z" fill="#7e4c40" opacity=".8" filter="url(#b2)"/>
<ellipse cx="100" cy="85" rx="6.500" ry="3.200" fill="#4a2628" filter="url(#b1)"/>
<ellipse cx="100" cy="79.500" rx="9" ry="2" fill="#7a4238" opacity=".7" filter="url(#b1)"/>
<path d="M82 50 C86 48 92 48 95 50 M106 50 C110 47.500 116 47.500 120 50" stroke="#3a2422" stroke-width="2.600" fill="none" filter="url(#b1)"/>
<ellipse cx="88.500" cy="56" rx="4" ry="1.800" fill="#5a3a34" opacity=".85" filter="url(#b1)"/>
<ellipse cx="112.500" cy="56" rx="4" ry="1.800" fill="#5a3a34" opacity=".85" filter="url(#b1)"/>
<ellipse cx="128" cy="64" rx="2.500" ry="6" fill="#b07a6c" filter="url(#b1)"/>
<!-- hair -->
<path d="M74 56 C68 26 78 12 100 11 C124 9 138 30 130 60 C128 44 124 38 118 36 C106 32 92 34 82 40 C78 44 76 50 74 56Z" fill="#2b2125" filter="url(#b2)"/>
<ellipse cx="101" cy="24" rx="24" ry="12" fill="#2b2125" filter="url(#b2)"/>
</g></svg>
<div class="a" style="left:801px;top:180px;width:112px;height:13.500px;background:rgba(228,228,228,.93);border-radius:3px 3px 0 0"></div>
<div class="t" style="left:813.2px;top:183.66px;font-size:9px;color:#333;transform:scaleX(0.913);">Nolan Kamoo</div>
<div class="t" style="left:868.4px;top:183.66px;font-size:9px;color:#777;transform:scaleX(0.913);">(Internal)</div>
<svg style="left:905.300px;top:184.300px" width="7" height="7.500" viewBox="0 0 14 15" fill="none" stroke="#555" stroke-width="1.300"><path d="M4.500 5 H1.500 V13.500 H12.500 V5 H9.500 M7 9.500 V1 M4.500 3.500 L7 1 L9.500 3.500"/></svg>
<div class="a" style="left:748px;top:193.500px;width:220px;height:336.500px;background:#fff;border-left:1px solid #e6e6e6"></div>
<svg style="left:754.5px;top:204.9px" width="6" height="3.500" viewBox="0 0 12 7" fill="none" stroke="#666" stroke-width="1.400" stroke-linecap="round"><path d="M1 1 L6 6 L11 1"/></svg>
<div class="t" style="left:764.5px;top:201.12px;font-size:9.6px;color:#222;font-weight:bold;transform:scaleX(0.911);">Participants (80)</div>
<svg style="left:951.5px;top:203.2px" width="5.600" height="5.600" viewBox="0 0 10 10" stroke="#555" stroke-width="1.200" stroke-linecap="round"><path d="M1 1 L9 9 M9 1 L1 9"/></svg>
<div class="a" style="left:757.300px;top:226.400px;width:187.500px;height:16.400px;background:#f1f1f1;border:1px solid #d8d8d8;border-radius:8.100px"></div>
<svg style="left:761.800px;top:231.300px" width="7.500" height="7.500" viewBox="0 0 15 15" fill="none" stroke="#444" stroke-width="1.400" stroke-linecap="round"><circle cx="6.300" cy="6.300" r="4.800"/><path d="M10 10 L14 14"/></svg>
<div class="t" style="left:774.8px;top:230.63px;font-size:7.8px;color:#555;transform:scaleX(0.918);">Search</div>
<svg style="left:950.800px;top:230.500px" width="10" height="9.500" viewBox="0 0 20 19" fill="none" stroke="#555" stroke-width="1.400"><path d="M3 1 V17 M.5 14.500 L3 17.500 L5.500 14.500 M7 3 H19 M7 8.500 H19 M7 14 H19"/></svg>
<svg style="left:787.3000000000001px;top:262.9px" width="8.600" height="8.600" viewBox="0 0 16 16" fill="none" stroke="#2e2e2e" stroke-width="1.400" stroke-linecap="round"><path d="M2.800 8.500 V7.300 A5.200 5.200 0 0 1 13.200 7.300 V8.500 M13 12.800 C13 14.600 11 15 8.800 15"/><rect x="1" y="7.600" width="3.400" height="5.400" rx="1.300" fill="#2e2e2e" stroke="none"/><rect x="11.600" y="7.600" width="3.400" height="5.400" rx="1.300" fill="#2e2e2e" stroke="none"/><circle cx="8.300" cy="15" r="1" fill="#2e2e2e" stroke="none"/></svg>
<div class="t" style="left:800.7px;top:260.10px;font-size:9.1px;color:#262626;transform:scaleX(0.911);">Benjamin Jodway</div>
<div class="t" style="left:800.7px;top:270.82px;font-size:8px;color:#666;transform:scaleX(0.921);">Me, internal</div>
<svg style="left:903.0px;top:264.6px" width="7.600" height="6" viewBox="0 0 15 12" fill="none" stroke="#555" stroke-width="1.200"><rect x=".8" y=".8" width="13.400" height="10.400" rx="1.500"/><circle cx="5.500" cy="5" r="1.600"/><path d="M2.800 9.500 C3.200 7.500 7.800 7.500 8.200 9.500 M10 4 H12.500 M10 6.500 H12.500"/></svg>
<svg style="left:944.6px;top:263.40000000000003px" width="6" height="8.500" viewBox="0 0 12 17" fill="none" stroke="#d9634a" stroke-width="1.050" stroke-linecap="round"><rect x="4" y="1" width="4.500" height="8.500" rx="2.200"/><path d="M1.500 8 A4.800 4.800 0 0 0 11 8 M6.200 13 V16 M10.500 1.500 L1.500 15.500"/></svg>
<svg style="left:787.3000000000001px;top:288.4px" width="8.600" height="8.600" viewBox="0 0 16 16" fill="none" stroke="#2e2e2e" stroke-width="1.400" stroke-linecap="round"><path d="M2.800 8.500 V7.300 A5.200 5.200 0 0 1 13.200 7.300 V8.500 M13 12.800 C13 14.600 11 15 8.800 15"/><rect x="1" y="7.600" width="3.400" height="5.400" rx="1.300" fill="#2e2e2e" stroke="none"/><rect x="11.600" y="7.600" width="3.400" height="5.400" rx="1.300" fill="#2e2e2e" stroke="none"/><circle cx="8.300" cy="15" r="1" fill="#2e2e2e" stroke="none"/></svg>
<div class="t" style="left:800.7px;top:285.60px;font-size:9.1px;color:#262626;transform:scaleX(0.926);">Brandon Mcdonald</div>
<div class="t" style="left:800.7px;top:296.32px;font-size:8px;color:#666;transform:scaleX(0.934);">Host, internal</div>
<svg style="left:903.0px;top:290.1px" width="7.600" height="6" viewBox="0 0 15 12" fill="none" stroke="#555" stroke-width="1.200"><rect x=".8" y=".8" width="13.400" height="10.400" rx="1.500"/><circle cx="5.500" cy="5" r="1.600"/><path d="M2.800 9.500 C3.200 7.500 7.800 7.500 8.200 9.500 M10 4 H12.500 M10 6.500 H12.500"/></svg>
<svg style="left:944.6px;top:288.90000000000003px" width="6" height="8.500" viewBox="0 0 12 17" fill="none" stroke="#d9634a" stroke-width="1.050" stroke-linecap="round"><rect x="4" y="1" width="4.500" height="8.500" rx="2.200"/><path d="M1.500 8 A4.800 4.800 0 0 0 11 8 M6.200 13 V16 M10.500 1.500 L1.500 15.500"/></svg>
<svg style="left:787.3000000000001px;top:314.0px" width="8.600" height="8.600" viewBox="0 0 16 16" fill="none" stroke="#2e2e2e" stroke-width="1.400" stroke-linecap="round"><path d="M2.800 8.500 V7.300 A5.200 5.200 0 0 1 13.200 7.300 V8.500 M13 12.800 C13 14.600 11 15 8.800 15"/><rect x="1" y="7.600" width="3.400" height="5.400" rx="1.300" fill="#2e2e2e" stroke="none"/><rect x="11.600" y="7.600" width="3.400" height="5.400" rx="1.300" fill="#2e2e2e" stroke="none"/><circle cx="8.300" cy="15" r="1" fill="#2e2e2e" stroke="none"/></svg>
<div class="t" style="left:800.7px;top:311.20px;font-size:9.1px;color:#262626;transform:scaleX(0.905);">Nolan Kamoo</div>
<div class="t" style="left:800.7px;top:321.92px;font-size:8px;color:#666;transform:scaleX(0.922);">Internal</div>
<svg style="left:903.0px;top:315.70000000000005px" width="7.600" height="6" viewBox="0 0 15 12" fill="none" stroke="#555" stroke-width="1.200"><rect x=".8" y=".8" width="13.400" height="10.400" rx="1.500"/><circle cx="5.500" cy="5" r="1.600"/><path d="M2.800 9.500 C3.200 7.500 7.800 7.500 8.200 9.500 M10 4 H12.500 M10 6.500 H12.500"/></svg>
<svg style="left:923.500px;top:315.90000000000003px" width="8" height="5.500" viewBox="0 0 16 11" fill="none" stroke="#3d8fe0" stroke-width="1.400"><rect x=".8" y=".8" width="10" height="9.400" rx="1.500"/><path d="M11 4 L15 2 V9 L11 7"/></svg>
<svg style="left:944.6px;top:314.50000000000006px" width="6" height="8.500" viewBox="0 0 12 17" fill="none" stroke="#4c9a3e" stroke-width="1.300" stroke-linecap="round"><rect x="4" y="1" width="4.500" height="8.500" rx="2.200" fill="#49b23c"/><path d="M1.500 8 A4.800 4.800 0 0 0 11 8 M6.200 13 V16" stroke="#9a9a9a"/></svg>
<svg style="left:787.3000000000001px;top:339.59999999999997px" width="8.600" height="8.600" viewBox="0 0 16 16" fill="none" stroke="#2e2e2e" stroke-width="1.400" stroke-linecap="round"><path d="M2.800 8.500 V7.300 A5.200 5.200 0 0 1 13.200 7.300 V8.500 M13 12.800 C13 14.600 11 15 8.800 15"/><rect x="1" y="7.600" width="3.400" height="5.400" rx="1.300" fill="#2e2e2e" stroke="none"/><rect x="11.600" y="7.600" width="3.400" height="5.400" rx="1.300" fill="#2e2e2e" stroke="none"/><circle cx="8.300" cy="15" r="1" fill="#2e2e2e" stroke="none"/></svg>
<div class="t" style="left:800.7px;top:336.80px;font-size:9.1px;color:#262626;transform:scaleX(0.923);">Kaitlyn Prebelich</div>
<svg style="left:903.0px;top:341.3px" width="7.600" height="6" viewBox="0 0 15 12" fill="none" stroke="#555" stroke-width="1.200"><rect x=".8" y=".8" width="13.400" height="10.400" rx="1.500"/><circle cx="5.500" cy="5" r="1.600"/><path d="M2.800 9.500 C3.200 7.500 7.800 7.500 8.200 9.500 M10 4 H12.500 M10 6.500 H12.500"/></svg>
<svg style="left:944.6px;top:340.1px" width="6" height="8.500" viewBox="0 0 12 17" fill="none" stroke="#d9634a" stroke-width="1.050" stroke-linecap="round"><rect x="4" y="1" width="4.500" height="8.500" rx="2.200"/><path d="M1.500 8 A4.800 4.800 0 0 0 11 8 M6.200 13 V16 M10.500 1.500 L1.500 15.500"/></svg>
<svg style="left:768px;top:259.500px" width="13" height="13" viewBox="0 0 26 26" fill="none" stroke="#cf5b4b" stroke-width="1.400" stroke-linecap="round" stroke-linejoin="round"><path d="M3 3 V23 M3 3 C11 2 11 11 4 12 C13 12 13 23 3 23 M15 4 H25 M21 4 V18 C21 24 15 24 14 19"/></svg>
<svg style="left:766.300px;top:284.700px" width="16.400" height="16.400" viewBox="0 0 32 32"><defs><clipPath id="av2"><circle cx="16" cy="16" r="16"/></clipPath><filter id="bl1"><feGaussianBlur stdDeviation="1"/></filter></defs><g clip-path="url(#av2)"><rect width="32" height="32" fill="#b27a2c"/><ellipse cx="8" cy="12" rx="8" ry="12" fill="#d29a3c" filter="url(#bl1)"/><path d="M8 34 C8 20 12 19 16 19 C22 19 25 21 25 34Z" fill="#1d2c48" filter="url(#bl1)"/><ellipse cx="16.500" cy="12.500" rx="4" ry="5" fill="#c98f6c" filter="url(#bl1)"/><path d="M12 10 C12 5 21 5 21 10Z" fill="#3a2a20" filter="url(#bl1)"/><path d="M15.500 19 L16.500 26 L18 19Z" fill="#d8dbe2"/></g></svg>
<div class="a" style="left:766.300px;top:310.300px;width:16.400px;height:16.400px;border-radius:50%;background:#e9e9e9"></div>
<div class="t" style="left:768.7px;top:314.18px;font-size:8.6px;color:#333;transform:scaleX(0.919);">NK</div>
<svg style="left:777.500px;top:321.200px" width="5.600" height="5.600" viewBox="0 0 18 18"><circle cx="9" cy="9" r="9" fill="#fff"/><circle cx="9" cy="9" r="7.500" fill="url(#wb)"/><path d="M3 12 A7 7 0 0 0 15 12 A8 5 0 0 1 3 12Z" fill="#6cc04a"/></svg>
<svg style="left:766.300px;top:336px" width="16.400" height="16.400" viewBox="0 0 32 32"><defs><clipPath id="av4"><circle cx="16" cy="16" r="16"/></clipPath></defs><g clip-path="url(#av4)"><rect width="32" height="32" fill="#a5613c"/><ellipse cx="16" cy="14" rx="8" ry="9" fill="#c9a48c" filter="url(#bl1)"/><path d="M4 18 C4 2 28 2 28 18 C26 8 20 6 16 6 C12 6 6 8 4 18Z" fill="#7a3d24" filter="url(#bl1)"/></g></svg>
<div class="a" style="left:749px;top:346px;width:219px;height:184px;background:#fff;border-top:1px solid #ececec"></div>
<svg style="left:754.5px;top:357.7px" width="6" height="3.500" viewBox="0 0 12 7" fill="none" stroke="#666" stroke-width="1.400" stroke-linecap="round"><path d="M1 1 L6 6 L11 1"/></svg>
<div class="t" style="left:764.5px;top:353.74px;font-size:9.4px;color:#222;font-weight:bold;transform:scaleX(0.886);">Chat</div>
<svg style="left:951.5px;top:356.2px" width="5.600" height="5.600" viewBox="0 0 10 10" stroke="#555" stroke-width="1.200" stroke-linecap="round"><path d="M1 1 L9 9 M9 1 L1 9"/></svg>
<div class="t" style="left:753.7px;top:380.32px;font-size:8px;color:#8f8f8f;transform:scaleX(0.925);">from Jesse Bair (He/His/Him) (internal) to Everyone:</div>
<div class="t" style="left:932.3px;top:380.32px;font-size:8px;color:#8f8f8f;transform:scaleX(0.931);">8:08&nbsp; PM</div>
<div class="t" style="left:753.7px;top:392.92px;font-size:8px;color:#2c2c2c;transform:scaleX(0.930);">second</div>
<div class="t" style="left:753.7px;top:410.32px;font-size:8px;color:#8f8f8f;transform:scaleX(0.917);">from Ramiro Garcia (internal) to Everyone:</div>
<div class="t" style="left:900.2px;top:410.32px;font-size:8px;color:#8f8f8f;transform:scaleX(0.931);">8:08&nbsp; PM</div>
<div class="t" style="left:753.7px;top:422.92px;font-size:8px;color:#2c2c2c;transform:scaleX(0.938);">Motion to table this piece until next week.</div>
<div class="t" style="left:753.7px;top:440.62px;font-size:8px;color:#8f8f8f;transform:scaleX(0.915);">from Savannah Dragan (internal) to Everyone:</div>
<div class="t" style="left:911.5px;top:440.62px;font-size:8px;color:#8f8f8f;transform:scaleX(0.931);">8:08&nbsp; PM</div>
<div class="t" style="left:753.7px;top:453.22px;font-size:8px;color:#2c2c2c;transform:scaleX(0.930);">second</div>
<div class="a" style="left:749px;top:473.300px;width:219px;height:1px;background:#ececec"></div>
<div class="t" style="left:755px;top:479.02px;font-size:8px;color:#777;transform:scaleX(0.920);">Send to:</div>
<div class="t" style="left:791px;top:479.23px;font-size:7.8px;color:#222;transform:scaleX(0.910);">Everyone</div>
<svg style="left:955.3px;top:481.2px" width="6" height="3.500" viewBox="0 0 12 7" fill="none" stroke="#555" stroke-width="1.400" stroke-linecap="round"><path d="M1 1 L6 6 L11 1"/></svg>
<div class="t" style="left:760.4px;top:498.66px;font-size:9px;color:#b0b0b0;transform:scaleX(0.926);">Enter chat message here</div>
<!-- bottom bar -->
<div class="a" style="left:32px;top:530px;width:936px;height:40px;background:#efefef;border-top:1px solid #e4e4e4"></div>
<div class="a" style="left:342.2px;top:537.3px;width:71.5px;height:25.40000000000009px;border-radius:12.700000000000045px;background:#fff;box-shadow:0 0 2.500px rgba(0,0,0,.10)"></div>
<svg style="left:352.700px;top:544.800px" width="7" height="10.500" viewBox="0 0 14 21" fill="none" stroke="#d4553a" stroke-width="1.300" stroke-linecap="round"><rect x="4.500" y="1.500" width="5.500" height="10.500" rx="2.700"/><path d="M2 10 A5.500 5.500 0 0 0 12.500 10 M7.200 16 V19.500 M12 1.500 L2 19"/></svg>
<div class="t" style="left:365.6px;top:546.15px;font-size:9.2px;color:#333;transform:scaleX(0.913);">Unmute</div>
<svg style="left:403.0px;top:548.9px" width="5" height="3" viewBox="0 0 10 6" fill="none" stroke="#444" stroke-width="1.400" stroke-linecap="round"><path d="M1 1 L5 5 L9 1"/></svg>
<div class="a" style="left:420px;top:537.3px;width:83px;height:25.40000000000009px;border-radius:12.700000000000045px;background:#fff;box-shadow:0 0 2.500px rgba(0,0,0,.10)"></div>
<svg style="left:428.800px;top:545.700px" width="10.500" height="8.500" viewBox="0 0 21 17" fill="none" stroke="#d4553a" stroke-width="1.300" stroke-linecap="round" stroke-linejoin="round"><rect x="1" y="2.500" width="13" height="12" rx="1.800"/><path d="M14 7 L19.500 4 V13 L14 10 M13.500 1.500 L2 16"/></svg>
<div class="t" style="left:443px;top:546.15px;font-size:9.2px;color:#333;transform:scaleX(0.933);">Start video</div>
<svg style="left:492.1px;top:548.9px" width="5" height="3" viewBox="0 0 10 6" fill="none" stroke="#444" stroke-width="1.400" stroke-linecap="round"><path d="M1 1 L5 5 L9 1"/></svg>
<div class="a" style="left:509px;top:537.3px;width:54px;height:25.40000000000009px;border-radius:12.700000000000045px;background:#fff;box-shadow:0 0 2.500px rgba(0,0,0,.10)"></div>
<svg style="left:518px;top:545px" width="10" height="10" viewBox="0 0 20 20" fill="none" stroke="#444" stroke-width="1.300" stroke-linecap="round" stroke-linejoin="round"><path d="M6.500 6.500 H2 V18 H18 V6.500 H13.500 M10 12.500 V2 M7 5 L10 2 L13 5"/></svg>
<div class="t" style="left:532.4px;top:546.15px;font-size:9.2px;color:#333;transform:scaleX(0.863);">Share</div>
<div class="a" style="left:569.3px;top:537.3px;width:25.200000000000045px;height:25.40000000000009px;border-radius:12.700000000000045px;background:#fff;box-shadow:0 0 2.500px rgba(0,0,0,.10)"></div>
<svg style="left:576.800px;top:544.800px" width="10.500" height="10.500" viewBox="0 0 21 21" fill="none" stroke="#444" stroke-width="1.300" stroke-linecap="round"><path d="M14.500 3 A8 8 0 1 0 18 8.500"/><circle cx="7.500" cy="9" r=".8" fill="#444"/><circle cx="12.500" cy="9" r=".8" fill="#444"/><path d="M6.500 12.500 C8 15 12 15 13.500 12.500 M17.500 1 V5 M15.500 3 H19.500"/></svg>
<div class="a" style="left:600.8px;top:537.3px;width:25.200000000000045px;height:25.40000000000009px;border-radius:12.700000000000045px;background:#fff;box-shadow:0 0 2.500px rgba(0,0,0,.10)"></div>
<div class="a" style="left:609.5px;top:549.500px;width:1.400px;height:1.400px;border-radius:50%;background:#777"></div>
<div class="a" style="left:612.7px;top:549.500px;width:1.400px;height:1.400px;border-radius:50%;background:#777"></div>
<div class="a" style="left:615.9px;top:549.500px;width:1.400px;height:1.400px;border-radius:50%;background:#777"></div>
<div class="a" style="left:632.3px;top:537.3px;width:25.5px;height:25.40000000000009px;border-radius:12.700000000000045px;background:#c9432d;box-shadow:0 0 2.500px rgba(0,0,0,.10)"></div>
<svg style="left:641.500px;top:546.500px" width="7" height="7" viewBox="0 0 14 14" stroke="#fff" stroke-width="1.700" stroke-linecap="round"><path d="M1.500 1.500 L12.500 12.500 M12.500 1.500 L1.500 12.500"/></svg>
<div class="a" style="left:815.6px;top:538.3px;width:145.19999999999993px;height:23.40000000000009px;border-radius:11.700000000000045px;background:#fff;box-shadow:0 0 2.500px rgba(0,0,0,.10)"></div>
<div class="a" style="left:889.300px;top:538.300px;width:1px;height:23.400px;background:#ececec"></div>
<div class="a" style="left:937.300px;top:538.300px;width:1px;height:23.400px;background:#ececec"></div>
<svg style="left:824.300px;top:545.300px" width="10" height="10" viewBox="0 0 20 20" fill="none" stroke="#4674b4" stroke-width="1.300" stroke-linecap="round"><circle cx="9" cy="6" r="4"/><path d="M1.500 18.500 C1.500 13 5 12 9 12 C10.500 12 12 12.200 13 12.800 M1.500 18.500 H11"/><rect x="13" y="14" width="6" height="4.500" rx="1"/><path d="M14.500 15.800 H17.500 M14.500 17 H17.500" stroke-width=".8"/></svg>
<div class="t" style="left:838.7px;top:546.09px;font-size:9.3px;color:#4674b4;transform:scaleX(0.918);">Participants</div>
<svg style="left:898.300px;top:545px" width="10.500" height="10.500" viewBox="0 0 21 21" fill="none" stroke="#4674b4" stroke-width="1.300" stroke-linecap="round" stroke-linejoin="round"><path d="M3 18.500 L4.500 14.500 A8 8 0 1 1 7.500 17.300Z"/></svg>
<div class="t" style="left:913.5px;top:546.09px;font-size:9.3px;color:#4674b4;transform:scaleX(0.881);">Chat</div>
<div class="a" style="left:945.1px;top:549.500px;width:1.400px;height:1.400px;border-radius:50%;background:#777"></div>
<div class="a" style="left:948.3px;top:549.500px;width:1.400px;height:1.400px;border-radius:50%;background:#777"></div>
<div class="a" style="left:951.5px;top:549.500px;width:1.400px;height:1.400px;border-radius:50%;background:#777"></div>
</div>
<div class="a" style="left:0;top:0;width:100%;height:100%;border-radius:6.500px;box-shadow:inset 0 0 0 1px rgba(0,0,0,.16)"></div>
</div>
</body></html>
